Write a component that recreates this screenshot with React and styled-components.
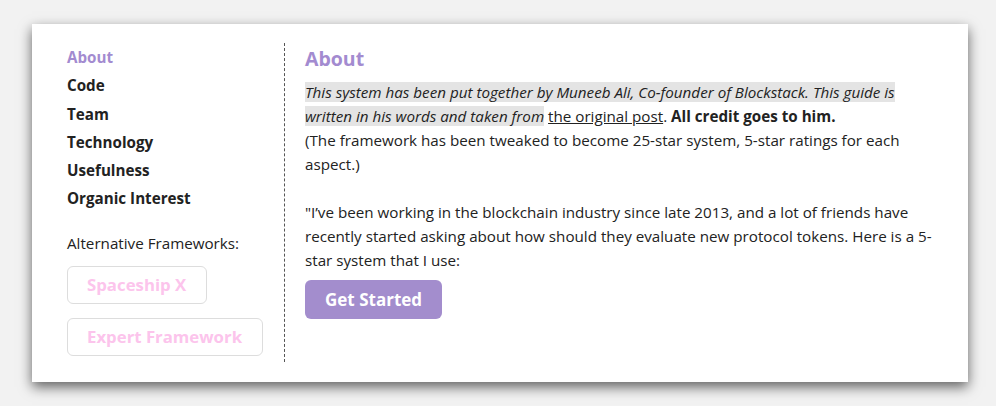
import React from 'react'
import styled, { createGlobalStyle } from 'styled-components'

const GlobalStyle = createGlobalStyle`
  html, body {
    margin: 0;
    padding: 0;
    background: #f2f2f2;
    font-family: "Open Sans", "Liberation Sans", sans-serif;
    color: #333;
  }
`

const Page = styled.div`
  padding: 24px 28px 24px 32px;
`

const Card = styled.div`
  width: 936px;
  box-sizing: border-box;
  background: #fff;
  box-shadow: 0 5px 12px rgba(0, 0, 0, 0.6);
  padding: 19px 35px 20px 35px;
  display: flex;
`

const Sidebar = styled.aside`
  width: 217px;
  flex-shrink: 0;
  padding-bottom: 6px;
  border-right: 1px dashed #555;
  display: flex;
  flex-direction: column;
`

const NavItem = styled.a`
  font-size: 15.2px;
  font-weight: 700;
  line-height: 28.3px;
  color: ${({ active }) => (active ? '#a38bd0' : '#222')};
  text-decoration: none;
  cursor: pointer;
`

const AltLabel = styled.div`
  margin-top: 18px;
  font-size: 15.2px;
  line-height: 24px;
  color: #222;
`

const OutlineButton = styled.button`
  align-self: flex-start;
  margin-top: ${({ first }) => (first ? '11px' : '14px')};
  height: 38px;
  padding: 0 20px 0 19px;
  background: #fff;
  border: 1px solid #ddd;
  border-radius: 6px;
  font-family: inherit;
  font-size: 16.8px;
  font-weight: 700;
  color: #fcc4ec;
  cursor: pointer;
`

const Content = styled.main`
  flex: 1;
  padding-left: 20px;
`

const Title = styled.h2`
  margin: 3px 0 8px;
  font-size: 19.5px;
  line-height: 26px;
  font-weight: 700;
  color: #a38bd0;
`

const Para = styled.p`
  margin: 0 0 ${({ tight }) => (tight ? '8px' : '24px')};
  font-size: 15.2px;
  line-height: 24px;
  color: #222;
`

const Highlight = styled.em`
  background: #e4e4e4;
  font-style: italic;
`

const Underlined = styled.a`
  color: #222;
  text-decoration: underline;
`

const PrimaryButton = styled.button`
  display: block;
  height: 39px;
  padding: 0 20px;
  background: #a38dcd;
  border: none;
  border-radius: 6px;
  font-family: inherit;
  font-size: 17px;
  font-weight: 700;
  color: #fff;
  cursor: pointer;
`

const navItems = ['About', 'Code', 'Team', 'Technology', 'Usefulness', 'Organic Interest']

export default function App() {
  return (
    <>
      <GlobalStyle />
      <Page>
        <Card>
          <Sidebar>
            {navItems.map((item, i) => (
              <NavItem key={item} active={i === 0}>{item}</NavItem>
            ))}
            <AltLabel>Alternative Frameworks:</AltLabel>
            <OutlineButton first>Spaceship X</OutlineButton>
            <OutlineButton>Expert Framework</OutlineButton>
          </Sidebar>
          <Content>
            <Title>About</Title>
            <Para>
              <Highlight>
                This system has been put together by Muneeb Ali, Co-founder of Blockstack. This guide is
                written in his words and taken from
              </Highlight>{' '}
              <Underlined>the original post</Underlined>. <strong>All credit goes to him.</strong>
              <br />
              (The framework has been tweaked to become 25-star system, 5-star ratings for each aspect.)
            </Para>
            <Para tight>
              "I’ve been working in the blockchain industry since late 2013, and a lot of friends have
              recently started asking about how should they evaluate new protocol tokens. Here is a 5-star
              system that I use:
            </Para>
            <PrimaryButton>Get Started</PrimaryButton>
          </Content>
        </Card>
      </Page>
    </>
  )
}
